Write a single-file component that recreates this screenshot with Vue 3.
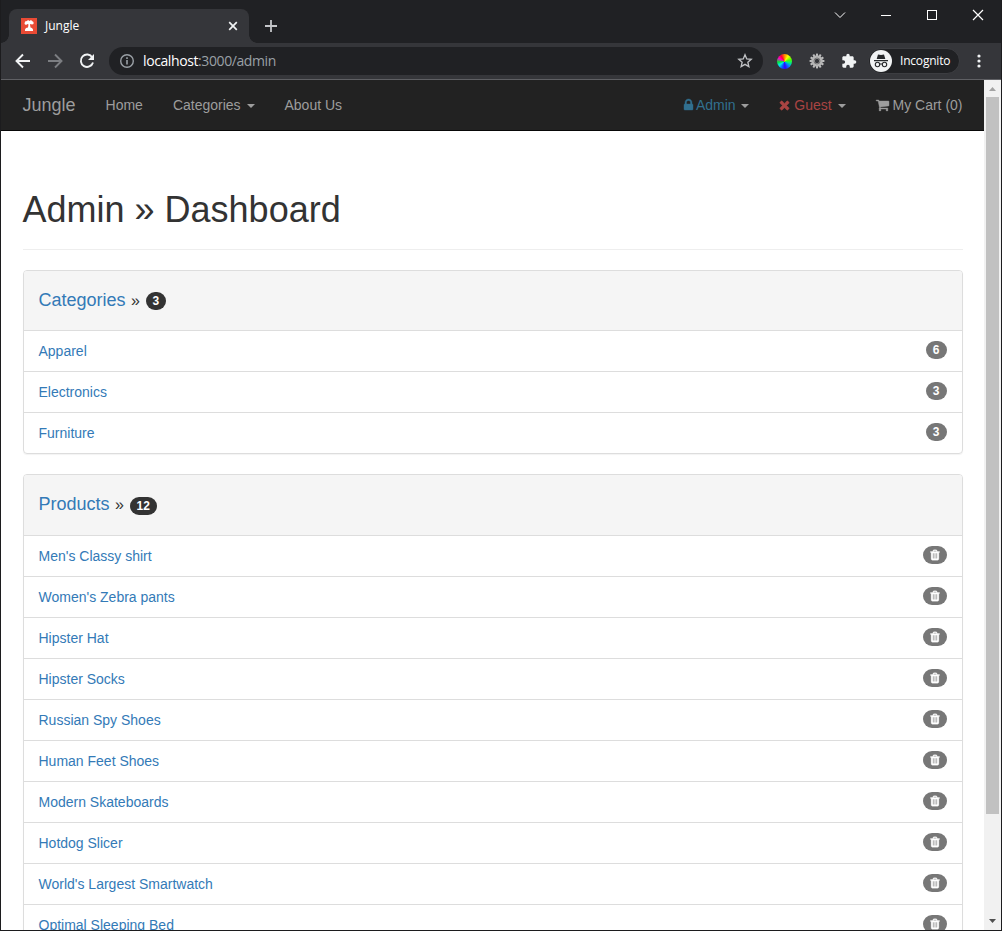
<script setup>
const paths = {
  lock: 'M640 768h512v-192q0-106-75-181t-181-75-181 75-75 181v192zm832 96v576q0 40-28 68t-68 28h-960q-40 0-68-28t-28-68v-576q0-40 28-68t68-28h32v-192q0-184 132-316t316-132 316 132 132 316v192h32q40 0 68 28t28 68z',
  times: 'M1490 1322q0 40-28 68l-136 136q-28 28-68 28t-68-28l-294-294-294 294q-28 28-68 28t-68-28l-136-136q-28-28-28-68t28-68l294-294-294-294q-28-28-28-68t28-68l136-136q28-28 68-28t68 28l294 294 294-294q28-28 68-28t68 28l136 136q28 28 28 68t-28 68l-294 294 294 294q28 28 28 68z',
  cart: 'M704 1536q0 52-38 90t-90 38-90-38-38-90 38-90 90-38 90 38 38 90zm896 0q0 52-38 90t-90 38-90-38-38-90 38-90 90-38 90 38 38 90zm128-1088v512q0 24-16.5 42.5t-40.5 21.5l-1044 122q13 60 13 70 0 16-24 64h920q26 0 45 19t19 45-19 45-45 19h-1024q-26 0-45-19t-19-45q0-11 8-31.500t16-36 21.500-40 15.500-29.500l-177-823h-204q-26 0-45-19t-19-45 19-45 45-19h256q16 0 28.500 6.500t19.500 15.500 13 24.500 8 26 5.500 29.500 4.500 26h1201q26 0 45 19t19 45z',
  trash: 'M704 1376v-704q0-14-9-23t-23-9h-64q-14 0-23 9t-9 23v704q0 14 9 23t23 9h64q14 0 23-9t9-23zm256 0v-704q0-14-9-23t-23-9h-64q-14 0-23 9t-9 23v704q0 14 9 23t23 9h64q14 0 23-9t9-23zm256 0v-704q0-14-9-23t-23-9h-64q-14 0-23 9t-9 23v704q0 14 9 23t23 9h64q14 0 23-9t9-23zm-544-992h448l-48-117q-7-9-17-11h-317q-10 2-17 11zm928 32v64q0 14-9 23t-23 9h-96v948q0 83-47 143.500t-113 60.500h-832q-66 0-113-58.500t-47-141.500v-952h-96q-14 0-23-9t-9-23v-64q0-14 9-23t23-9h309l70-167q15-37 54-63t79-26h320q40 0 79 26t54 63l70 167h309q14 0 23 9t9 23z'
}
const categories = [
  { name: 'Apparel', count: 6 },
  { name: 'Electronics', count: 3 },
  { name: 'Furniture', count: 3 }
]
const products = [
  "Men's Classy shirt", "Women's Zebra pants", 'Hipster Hat', 'Hipster Socks', 'Russian Spy Shoes',
  'Human Feet Shoes', 'Modern Skateboards', 'Hotdog Slicer', "World's Largest Smartwatch", 'Optimal Sleeping Bed'
]
const teeth = [0, 30, 60, 90, 120, 150, 180, 210, 240, 270, 300, 330]
</script>

<template>
  <div class="window">
    <div class="tabstrip">
      <div class="tab">
        <svg class="favicon" width="16" height="16" viewBox="0 0 16 16">
          <rect width="16" height="16" fill="#e94b35" />
          <path d="M4 3.500l2-.5 1-1 1.500 1L10 2l1 1 1.500 1v2l-1.500.5L9.500 6 9 6.500l.5 3 1.500.5 1 1.500V13H4v-1.500L5 10l2-.5.500-3L6.500 6 5 7 3.500 6z" fill="#fff" />
        </svg>
        <span class="tab-title">Jungle</span>
        <svg class="tab-close" width="10" height="10" viewBox="0 0 10 10"><path d="M1.200 1.200l7.600 7.600M8.800 1.200l-7.600 7.600" stroke="#f1f3f4" stroke-width="1.700" /></svg>
      </div>
      <svg class="plus" width="14" height="14" viewBox="0 0 14 14"><path d="M7 1v12M1 7h12" stroke="#c4c6c9" stroke-width="1.800" /></svg>
      <div class="controls">
        <svg width="12" height="12" viewBox="0 0 12 12"><path d="M1 3.500l5 5 5-5" fill="none" stroke="#fff" /></svg>
        <svg width="12" height="12" viewBox="0 0 12 12"><path d="M1 6.500h10" stroke="#fff" /></svg>
        <svg width="12" height="12" viewBox="0 0 12 12"><rect x="1.500" y="1.500" width="9" height="9" fill="none" stroke="#fff" /></svg>
        <svg width="12" height="12" viewBox="0 0 12 12"><path d="M1 1l10 10M11 1L1 11" stroke="#fff" stroke-width="1.200" /></svg>
      </div>
    </div>

    <div class="toolbar">
      <svg class="nav-ico" width="16" height="16" viewBox="0 0 16 16"><path d="M15 8H2M8 1.500L1.500 8 8 14.500" fill="none" stroke="#f1f3f4" stroke-width="1.900" /></svg>
      <svg class="nav-ico" width="16" height="16" viewBox="0 0 16 16"><path d="M1 8h13M8 1.500L14.500 8 8 14.500" fill="none" stroke="#7c7e82" stroke-width="1.900" /></svg>
      <svg class="nav-ico" width="16" height="16" viewBox="0 0 16 16"><path d="M13.300 4.400A6.200 6.200 0 1 0 14 9.500" fill="none" stroke="#f1f3f4" stroke-width="1.900" /><path d="M15 1v6H9z" fill="#f1f3f4" /></svg>
      <div class="omnibox">
        <svg width="16" height="16" viewBox="0 0 16 16"><circle cx="8" cy="8" r="6.300" fill="none" stroke="#9aa0a6" stroke-width="1.400" /><path d="M8 7v4.500M8 4.200v1.700" stroke="#9aa0a6" stroke-width="1.600" /></svg>
        <span class="url"><b>localhost</b>:3000/admin</span>
        <svg class="star" width="16" height="16" viewBox="0 0 16 16"><path d="M8 1.800l1.750 4.100 4.450.4-3.350 2.950 1 4.350L8 11.300l-3.850 2.300 1-4.350L1.800 6.300l4.450-.4z" fill="none" stroke="#c0c2c5" stroke-width="1.350" /></svg>
      </div>
      <div class="wheel"></div>
      <svg class="gear" width="16" height="16" viewBox="0 0 16 16">
        <rect v-for="a in teeth" :key="a" x="7" y="0.600" width="2" height="4" fill="#bdbdbd" :transform="`rotate(${a} 8 8)`" />
        <circle cx="8" cy="8" r="4" fill="none" stroke="#b5b5b5" stroke-width="3.600" />
        <circle cx="8" cy="8" r="3" fill="none" stroke="#777" stroke-width="1" />
      </svg>
      <svg class="puzzle" width="16" height="16" viewBox="0 0 24 24"><path d="M20.500 11H19V7c0-1.100-.9-2-2-2h-4V3.500a2.500 2.500 0 0 0-5 0V5H4c-1.100 0-2 .9-2 2v3.800h1.500a2.700 2.700 0 0 1 0 5.400H2V20c0 1.100.9 2 2 2h3.800v-1.500a2.700 2.700 0 0 1 5.400 0V22H17c1.100 0 2-.9 2-2v-4h1.500a2.500 2.500 0 0 0 0-5z" fill="#f1f3f4" /></svg>
      <div class="incognito">
        <svg width="22" height="22" viewBox="0 0 22 22">
          <circle cx="11" cy="11" r="11" fill="#f1f3f4" />
          <path d="M8 4.500l3 .6 3-.6 1.300 4.500H6.700zM4 10h14v1.200H4z" fill="#26282b" />
          <circle cx="7.500" cy="14.500" r="2.200" fill="none" stroke="#26282b" stroke-width="1.100" />
          <circle cx="14.500" cy="14.500" r="2.200" fill="none" stroke="#26282b" stroke-width="1.100" />
          <path d="M9.500 14.300q1.500-.9 3 0" fill="none" stroke="#26282b" />
        </svg>
        <span>Incognito</span>
      </div>
      <svg class="dots" width="4" height="14" viewBox="0 0 4 14"><circle cx="2" cy="2" r="1.600" fill="#f1f3f4" /><circle cx="2" cy="7" r="1.600" fill="#f1f3f4" /><circle cx="2" cy="12" r="1.600" fill="#f1f3f4" /></svg>
    </div>

    <div class="viewport">
      <div class="page">
        <nav class="navbar">
          <div class="container nav-inner">
            <a class="brand">Jungle</a>
            <a class="link">Home</a>
            <a class="link">Categories <i class="caret"></i></a>
            <a class="link">About Us</a>
            <span class="spacer"></span>
            <a class="link"><span class="info"><svg class="fa" width="9" height="14" viewBox="320 0 1152 1792"><path :d="paths.lock" /></svg> Admin</span> <i class="caret"></i></a>
            <a class="link"><span class="danger"><svg class="fa" width="11" height="14" viewBox="192 0 1408 1792"><path :d="paths.times" /></svg> Guest</span> <i class="caret"></i></a>
            <a class="link"><svg class="fa" width="13" height="14" viewBox="64 0 1664 1792"><path :d="paths.cart" /></svg> My Cart (0)</a>
          </div>
        </nav>

        <main class="container">
          <header class="page-header"><h1>Admin » Dashboard</h1></header>

          <section class="panel">
            <div class="panel-heading">
              <h4><a>Categories</a> <small>»</small> <span class="badge dark">3</span></h4>
            </div>
            <div v-for="c in categories" :key="c.name" class="item">
              <a>{{ c.name }}</a><span class="badge">{{ c.count }}</span>
            </div>
          </section>

          <section class="panel">
            <div class="panel-heading tall">
              <h4><a>Products</a> <small>»</small> <span class="badge dark">12</span></h4>
            </div>
            <div v-for="p in products" :key="p" class="item">
              <a>{{ p }}</a><span class="badge trash"><svg width="10" height="12" viewBox="192 0 1408 1792"><path :d="paths.trash" /></svg></span>
            </div>
          </section>
        </main>
      </div>

      <div class="scrollbar">
        <svg width="17" height="17" viewBox="0 0 17 17"><path d="M5 11L8.500 7l3.500 4z" fill="#a3a3a3" /></svg>
        <div class="thumb"></div>
        <svg width="17" height="17" viewBox="0 0 17 17"><path d="M5 6h7L8.500 10z" fill="#505050" /></svg>
      </div>
    </div>
  </div>
</template>

<style>
body { overflow: hidden; }
</style>

<style scoped>
* { box-sizing: border-box; }
.window {
  width: 1002px; height: 931px; overflow: hidden; background: #202124;
  border: solid #1c1c1e; border-width: 0 1px 1px;
  display: flex; flex-direction: column;
  font-family: "Liberation Sans", Arial, sans-serif; font-size: 14px; line-height: 20px;
}
svg { display: block; flex: none; }
.tabstrip { height: 43px; flex: none; display: flex; align-items: flex-start; padding-left: 8px; background: #202124; }
.tab {
  position: relative; width: 240px; height: 34px; margin-top: 9px; padding: 0 11px 0 12px;
  background: #35363a; border-radius: 8px 8px 0 0; display: flex; align-items: center;
  font-family: "Open Sans", "Noto Sans", sans-serif; font-size: 12px; color: #fff;
}
.tab::before, .tab::after { content: ""; position: absolute; bottom: 0; width: 8px; height: 8px; }
.tab::before { left: -8px; background: radial-gradient(circle at 0 0, transparent 7.500px, #35363a 8px); }
.tab::after { right: -8px; background: radial-gradient(circle at 100% 0, transparent 7.500px, #35363a 8px); }
.tab-title { margin-left: 8px; letter-spacing: 0; flex: 1; }
.plus { margin: 19px 0 0 15px; }
.controls { margin: 9px 17px 0 auto; display: flex; gap: 34px; }

.toolbar { height: 37px; flex: none; background: #35363a; border-bottom: 1px solid #5f6064; display: flex; align-items: center; padding-left: 14px; }
.nav-ico { margin-right: 16px; }
.omnibox { width: 654px; height: 28px; margin-left: -2px; border-radius: 14px; background: #202124; display: flex; align-items: center; padding: 0 10px; }
.url { margin-left: 8px; flex: 1; color: #9aa0a6; font-family: "Open Sans", "Noto Sans", sans-serif; font-size: 14px; letter-spacing: -.4px; }
.url b { font-weight: 400; color: #fff; }
.wheel {
  width: 15px; height: 15px; margin-left: 14px; border-radius: 50%;
  background: conic-gradient(#ff0 0 45deg, #f70 45deg 80deg, #f03 80deg 120deg, #d0f 120deg 160deg, #30f 160deg 205deg, #09f 205deg 245deg, #0ee 245deg 275deg, #0e3 275deg 320deg, #8f0 320deg);
  background: conic-gradient(#f80 0deg, #ff0 35deg, #4f0 75deg, #0e8 105deg, #08f 135deg, #30f 175deg, #06f 205deg, #0ee 235deg, #0e3 265deg, #f0c 300deg, #f03 330deg, #f80 360deg);
}
.gear { margin-left: 17px; }
.puzzle { margin-left: 16px; }
.incognito {
  width: 92px; height: 26px; margin-left: 11px; padding-left: 1px; border-radius: 13px; background: #202124; border: 1px solid #3c3d41;
  display: flex; align-items: center; color: #fff; font-family: "Open Sans", "Noto Sans", sans-serif; font-size: 12px;
}
.incognito span { margin-left: 8px; letter-spacing: -.2px; }
.dots { margin-left: 17px; }

.viewport { flex: 1; min-height: 0; display: flex; }
.page { flex: 1; min-width: 0; background: #fff; overflow: hidden; color: #333; }
.container { width: 970px; margin: 0 auto; padding: 0 15px; }
.navbar { height: 51px; background: #222; border-bottom: 1px solid #080808; color: #9d9d9d; }
.nav-inner { display: flex; padding: 0; }
.brand { padding: 15px; font-size: 18px; }
.link { padding: 15px; white-space: nowrap; }
.spacer { flex: 1; }
.caret { display: inline-block; margin-left: 2px; vertical-align: middle; border: 4px solid transparent; border-top-color: #9d9d9d; border-bottom: 0; }
.fa { display: inline-block; vertical-align: -2px; fill: currentColor; stroke: currentColor; stroke-width: 50; overflow: visible; }
.info { color: #31708f; }
.danger { color: #a94442; }

.page-header { margin: 59px 0 20px; padding-bottom: 19px; border-bottom: 1px solid #eee; }
h1 { margin: 0; font-size: 36px; font-weight: 400; line-height: 40px; }
.panel { border: 1px solid #ddd; border-radius: 4px; margin-bottom: 20px; box-shadow: 0 1px 1px rgba(0, 0, 0, .05); }
.panel-heading { height: 59px; padding: 19px 15px; background: #f5f5f5; border-radius: 3px 3px 0 0; }
.panel-heading.tall { height: 60px; }
h4 { margin: 0; font-size: 18px; font-weight: 400; line-height: 20px; }
h4 small { display: inline-block; width: 10px; font-size: 16px; line-height: 18px; text-align: center; }
a { color: #337ab7; }
.navbar a { color: #9d9d9d; }
.item { height: 41px; border-top: 1px solid #ddd; padding: 10px 15px; display: flex; justify-content: space-between; align-items: flex-start; }
.badge {
  display: inline-block; min-width: 10px; padding: 3px 7px; border-radius: 10px; background: #777; color: #fff;
  font-size: 12px; font-weight: 700; line-height: 12px; text-align: center;
}
.dark { background: #333; vertical-align: middle; }
.tall .dark { position: relative; top: 1px; }
.trash { width: 24px; height: 18px; }
.trash svg { fill: #fff; stroke: #fff; stroke-width: 45; }

.scrollbar { width: 17px; background: #f1f1f1; display: flex; flex-direction: column; }
.thumb { height: 717px; margin: 0 2px auto; background: #c1c1c1; }
</style>
